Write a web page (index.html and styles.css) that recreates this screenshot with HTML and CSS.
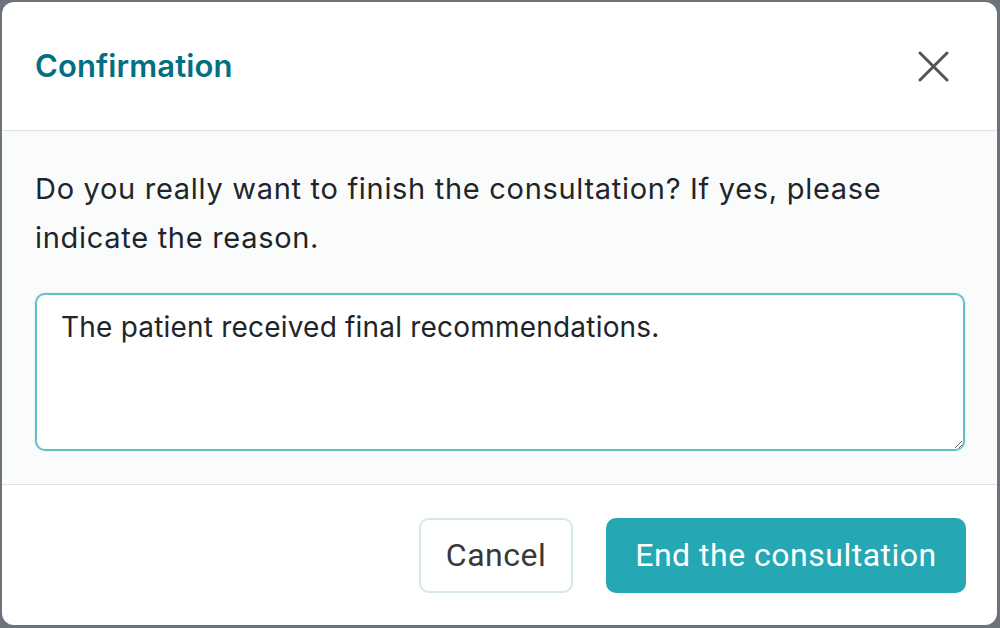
FILE: index.html
```html
<!DOCTYPE html>
<html lang="en">
<head>
<meta charset="utf-8">
<title>Confirmation</title>
<link rel="stylesheet" href="styles.css">
</head>
<body>
<div class="backdrop">
  <div class="modal">
    <div class="modal-header">
      <h5 class="modal-title">Confirmation</h5>
      <button class="close" type="button" aria-label="Close">
        <svg width="31" height="31" viewBox="0 0 31 31"><path d="M2 2 L29 29 M29 2 L2 29" stroke="#555555" stroke-width="3" stroke-linecap="round" fill="none"/></svg>
      </button>
    </div>
    <div class="modal-body">
      <p class="question">Do you really want to finish the consultation? If yes, please indicate the reason.</p>
      <textarea class="reason">The patient received final recommendations.</textarea>
    </div>
    <div class="modal-footer">
      <button class="btn btn-cancel" type="button">Cancel</button>
      <button class="btn btn-primary" type="button">End the consultation</button>
    </div>
  </div>
</div>
</body>
</html>
```

FILE: styles.css
```css
html, body {
  margin: 0;
  padding: 0;
  height: 100%;
}
body {
  background: #6d737b;
  font-family: Inter, "Noto Sans", sans-serif;
  color: #212529;
}
.backdrop {
  box-sizing: border-box;
  height: 628px;
  width: 1000px;
  padding: 2px 3px 3px 2px;
  display: flex;
}
.modal {
  flex: 1;
  background: #ffffff;
  border-radius: 12px;
  display: flex;
  flex-direction: column;
  overflow: hidden;
}
.modal-header {
  height: 128px;
  display: flex;
  align-items: center;
  justify-content: space-between;
  padding: 0 48px 0 33px;
  border-bottom: 1px solid #dee2e6;
}
.modal-title {
  margin: 0;
  font-size: 31px;
  font-weight: 600;
  color: #036f82;
  line-height: 1.2;
  letter-spacing: 0.1px;
}
.close {
  background: none;
  border: 0;
  padding: 0;
  width: 31px;
  height: 31px;
  display: flex;
  cursor: pointer;
}
.modal-body {
  background: #fafcfc;
  padding: 33px 32px 33px 33px;
  border-bottom: 1px solid #dee2e6;
  display: flex;
  flex-direction: column;
}
.question {
  margin: 0 0 31px 0;
  font-size: 29px;
  line-height: 49px;
  letter-spacing: 0.7px;
}
.reason {
  box-sizing: border-box;
  height: 158px;
  width: 100%;
  border: 2px solid #64c0c8;
  border-radius: 10px;
  padding: 11px 24px;
  font-family: Inter, "Noto Sans", sans-serif;
  font-size: 28px;
  line-height: 42px;
  letter-spacing: 0.2px;
  color: #212529;
  background: #ffffff;
  box-shadow: 0 0 0 1px rgba(100, 192, 200, 0.12);
  resize: vertical;
  outline: none;
}
.modal-footer {
  flex: 1;
  display: flex;
  align-items: center;
  justify-content: flex-end;
  gap: 33px;
  padding: 0 31px 0 33px;
}
.btn {
  box-sizing: border-box;
  height: 75px;
  border-radius: 10px;
  font-family: Roboto, "Liberation Sans", sans-serif;
  font-size: 32px;
  letter-spacing: 0.5px;
  padding: 0;
  cursor: pointer;
}
.btn-cancel {
  width: 154px;
  background: #ffffff;
  border: 2px solid #d5e7eb;
  color: #383838;
}
.btn-primary {
  width: 360px;
  background: #25a8b3;
  border: 0;
  color: #ffffff;
}
```
